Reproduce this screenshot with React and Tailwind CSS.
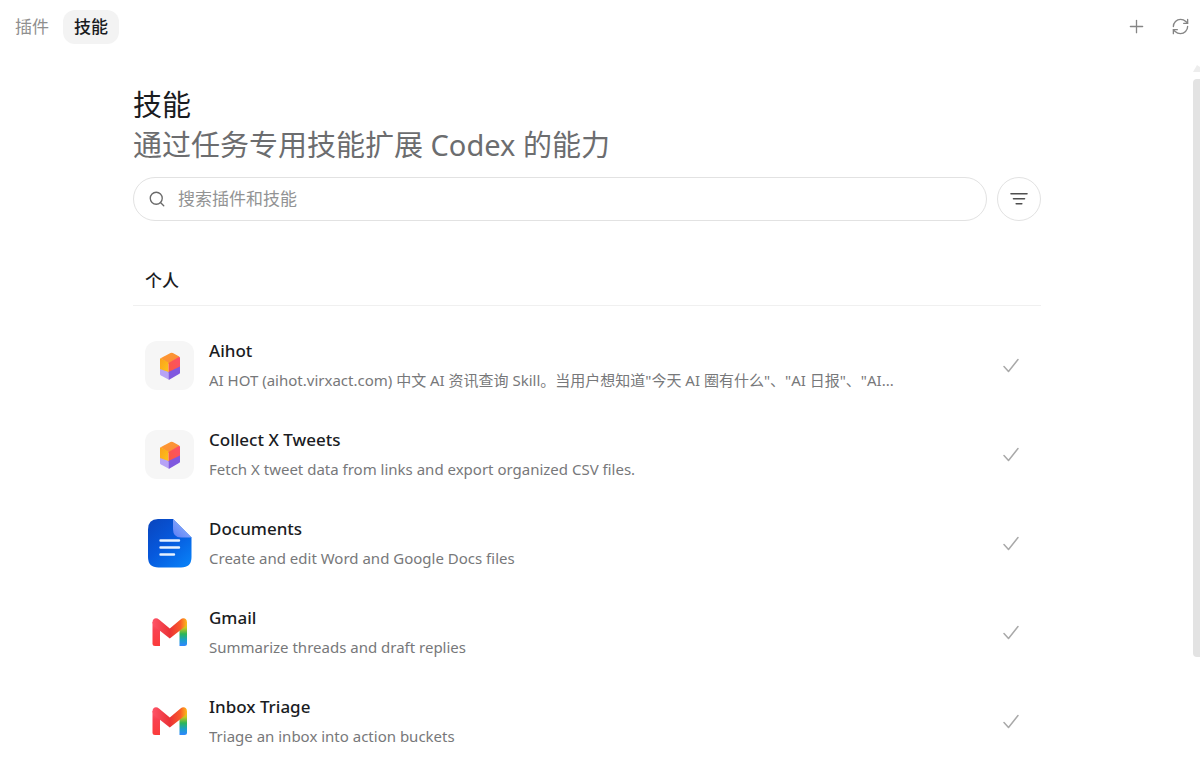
import { Plus, RefreshCw, Search } from 'lucide-react';

const skills = [
  {
    name: 'Aihot',
    icon: 'cube',
    description:
      'AI HOT (aihot.virxact.com) 中文 AI 资讯查询 Skill。当用户想知道"今天 AI 圈有什么"、"AI 日报"、"AI...',
  },
  {
    name: 'Collect X Tweets',
    icon: 'cube',
    description: 'Fetch X tweet data from links and export organized CSV files.',
  },
  {
    name: 'Documents',
    icon: 'document',
    description: 'Create and edit Word and Google Docs files',
  },
  {
    name: 'Gmail',
    icon: 'gmail',
    description: 'Summarize threads and draft replies',
  },
  {
    name: 'Inbox Triage',
    icon: 'gmail',
    description: 'Triage an inbox into action buckets',
  },
];

function CubeIcon() {
  return (
    <div className="flex size-full items-center justify-center rounded-xl bg-[#f6f6f6]">
      <svg viewBox="0 0 20 28" className="h-7 w-5" aria-hidden="true">
        <defs>
          <linearGradient id="cube-top" x1="0" y1="0" x2="1" y2="1">
            <stop offset="0" stopColor="#ff9a2e" />
            <stop offset="1" stopColor="#f98a3c" />
          </linearGradient>
          <linearGradient id="cube-left" x1="0" y1="0" x2="1" y2="1">
            <stop offset="0" stopColor="#fba01c" />
            <stop offset="1" stopColor="#fcc419" />
          </linearGradient>
          <linearGradient id="cube-right" x1="0" y1="1" x2="1" y2="0">
            <stop offset="0" stopColor="#fb5b3b" />
            <stop offset="1" stopColor="#fb4f6c" />
          </linearGradient>
        </defs>
        <path d="M0.6 6.2 L10.5 0.9 Q11.7 0.4 12.9 1 L19.2 4.5 Q19.8 5 19.2 5.5 L8.5 11.8 Z" fill="url(#cube-top)" />
        <path d="M0 7 Q0 6.2 0.8 6.2 L8.5 10.6 V20.5 L0 18 Z" fill="url(#cube-left)" />
        <path d="M8.5 11 L18.8 5 Q20 4.6 20 6 V15.8 L8.5 21 Z" fill="url(#cube-right)" />
        <path d="M0 17 L8.5 20 V27.6 L1 23.6 Q0 23 0 22 Z" fill="#b7a3f6" />
        <path d="M8.5 20 L20 14.6 V20.5 Q20 21.5 19 22.1 L9.6 27.5 Q9 27.8 8.5 27.6 Z" fill="#8058df" />
      </svg>
    </div>
  );
}

function DocumentIcon() {
  return (
    <svg viewBox="0 0 49 49" className="size-full" aria-hidden="true">
      <defs>
        <linearGradient id="doc-body" x1="0" y1="0" x2="0.8" y2="1">
          <stop offset="0" stopColor="#0a45bd" />
          <stop offset="0.5" stopColor="#0658dc" />
          <stop offset="1" stopColor="#087df5" />
        </linearGradient>
        <linearGradient id="doc-fold" x1="0" y1="1" x2="1" y2="0">
          <stop offset="0" stopColor="#5b7cf5" />
          <stop offset="1" stopColor="#9cc0ff" />
        </linearGradient>
      </defs>
      <path d="M13 0 H28 L46.5 18.5 V38 Q46.5 48.5 36 48.5 H13.5 Q3 48.5 3 38 V10.5 Q3 0 13 0 Z" fill="url(#doc-body)" />
      <path d="M28 0 L46.5 18.5 H36 Q28 18.5 28 10 Z" fill="url(#doc-fold)" />
      <path d="M15.5 21.5 H34 M15.5 28.5 H34 M15.5 35.5 H29" fill="none" stroke="#e6f1ff" strokeWidth="2.4" strokeLinecap="round" />
    </svg>
  );
}

function GmailIcon() {
  return (
    <svg viewBox="0 0 49 49" className="size-full" aria-hidden="true">
      <defs>
        <linearGradient id="gmail-left" x1="0" y1="0" x2="0" y2="1">
          <stop offset="0" stopColor="#ff5a6e" />
          <stop offset="0.35" stopColor="#f94150" />
          <stop offset="1" stopColor="#fb3b3b" />
        </linearGradient>
        <linearGradient id="gmail-right" x1="0" y1="0" x2="0" y2="1">
          <stop offset="0" stopColor="#fcc31b" />
          <stop offset="0.25" stopColor="#c9c51f" />
          <stop offset="0.5" stopColor="#2cb658" />
          <stop offset="0.75" stopColor="#1ba0c8" />
          <stop offset="1" stopColor="#2f86ff" />
        </linearGradient>
        <linearGradient id="gmail-fold" x1="0" y1="0" x2="1" y2="0">
          <stop offset="0" stopColor="#ff5468" />
          <stop offset="0.5" stopColor="#ea3236" />
          <stop offset="0.8" stopColor="#f9582a" />
          <stop offset="1" stopColor="#fdbb18" />
        </linearGradient>
      </defs>
      <path d="M7.5 14 H15 V38 H10 Q7.5 38 7.5 35.5 Z" fill="url(#gmail-left)" />
      <path d="M34.5 14 H42 V35.5 Q42 38 39.5 38 H34.5 Z" fill="url(#gmail-right)" />
      <path
        d="M7.5 14.5 C7.5 10 11.5 9.3 14 11.5 L24.8 20.5 L35.5 11.5 C38 9.3 42 10 42 14.5 Q42 16.7 40 18.5 L24.8 30.5 L9.5 18.5 Q7.5 16.7 7.5 14.5 Z"
        fill="url(#gmail-fold)"
      />
    </svg>
  );
}

const icons = { cube: CubeIcon, document: DocumentIcon, gmail: GmailIcon };

function SkillRow({ skill }) {
  const Icon = icons[skill.icon];
  return (
    <li className="flex h-[89px] items-center gap-[15px] pr-[22px] pl-3">
      <div className="size-[49px] shrink-0">
        <Icon />
      </div>
      <div className="min-w-0 flex-1">
        <h3 className="text-[17px] leading-[29px] font-medium text-[#1a1c1f]">{skill.name}</h3>
        <p className="truncate text-[15px] leading-[30px] text-[#77787a]">{skill.description}</p>
      </div>
      <svg viewBox="0 0 16 16" className="size-4 shrink-0" fill="none" stroke="#a9a9a9" strokeWidth="1.5" aria-hidden="true">
        <path d="M1 8.5 L5.5 13.5 L15 1.5" strokeLinecap="round" strokeLinejoin="round" />
      </svg>
    </li>
  );
}

export default function App() {
  return (
    <div className="flex h-screen flex-col overflow-hidden bg-white font-['Noto_Sans','Noto_Sans_CJK_SC',sans-serif] text-[#1a1c1f]">
      <header className="flex h-[53px] shrink-0 items-center justify-between pr-[10px] pl-[5px]">
        <nav className="flex gap-1 text-[17px] leading-[34px]">
          <button type="button" className="rounded-xl px-[10px] text-[#8f8f8f]">插件</button>
          <button type="button" className="rounded-xl bg-[#f3f3f3] px-[11px] font-medium">技能</button>
        </nav>
        <div className="flex items-center gap-6 text-[#858585]">
          <button type="button" aria-label="添加">
            <Plus size={21} strokeWidth={1.5} />
          </button>
          <button type="button" aria-label="刷新">
            <RefreshCw size={19} strokeWidth={1.7} />
          </button>
        </div>
      </header>

      <div className="flex min-h-0 flex-1">
        <main className="min-w-0 flex-1 overflow-hidden pr-[19px]">
          <div className="mx-auto max-w-[908px] pt-[31px]">
            <h1 className="text-[29px] leading-[41px]">技能</h1>
            <p className="text-[29px] leading-[39px] text-[#6c6d6f]">通过任务专用技能扩展 Codex 的能力</p>

            <div className="mt-[13px] flex gap-[10px]">
              <label className="flex h-11 flex-1 items-center gap-3 rounded-full border border-[#e2e2e2] px-[14px]">
                <Search size={18} strokeWidth={1.8} className="text-[#6a6a6a]" />
                <input
                  type="text"
                  aria-label="搜索插件和技能"
                  placeholder="搜索插件和技能"
                  className="min-w-0 flex-1 text-[17px] outline-none placeholder:text-[#929394]"
                />
              </label>
              <button
                type="button"
                aria-label="筛选"
                className="flex size-11 items-center justify-center rounded-full border border-[#e2e2e2]"
              >
                <svg viewBox="0 0 18 14" className="h-[14px] w-[18px]" fill="none" stroke="#4f4f4f" strokeWidth="1.6" strokeLinecap="round">
                  <path d="M1 1.7 H17 M3.5 6.7 H14.5 M6.2 11.7 H11.8" />
                </svg>
              </button>
            </div>

            <section>
              <h2 className="mt-[35px] border-b border-[#f0f0f0] pl-3 text-[17px] leading-[49px] font-medium">个人</h2>
              <ul className="pt-[15px]">
                {skills.map((skill) => (
                  <SkillRow key={skill.name} skill={skill} />
                ))}
              </ul>
            </section>
          </div>
        </main>

        <div className="flex w-[7px] shrink-0 flex-col pt-3" aria-hidden="true">
          <svg viewBox="0 0 7 7" className="size-[7px] shrink-0">
            <path d="M0 7 L4 0 L7 2 V7 Z" fill="#ededed" />
          </svg>
          <div className="mt-[7px] h-[82%] rounded-l bg-[#e3e3e3]" />
        </div>
      </div>
    </div>
  );
}
